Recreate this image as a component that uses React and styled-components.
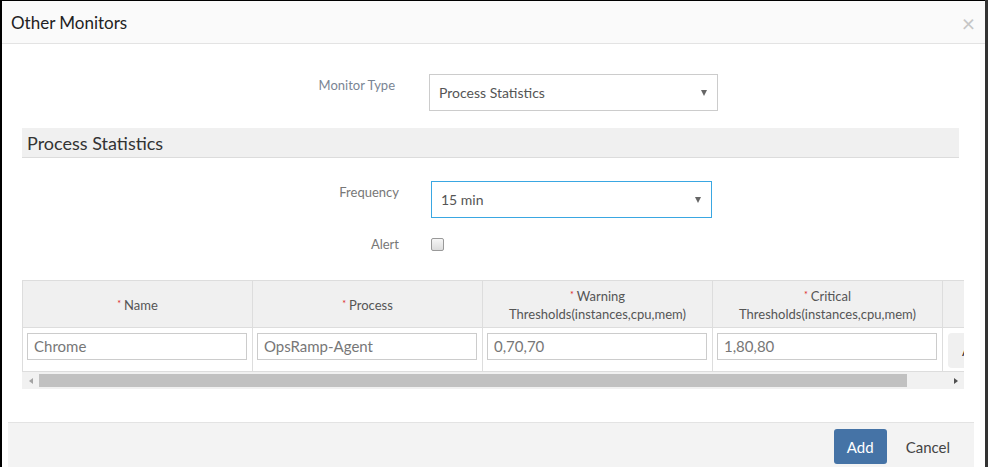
import React from 'react';
import styled, { createGlobalStyle } from 'styled-components';

const GlobalStyle = createGlobalStyle`
  html, body {
    margin: 0;
    padding: 0;
    background: #2f2f2f;
    font-family: Lato, "Open Sans", "Liberation Sans", sans-serif;
  }
`;

const Screen = styled.div`
  display: flex;
  align-items: flex-start;
  width: 988px;
  height: 467px;
  overflow: hidden;
  background: #333;
`;

const Modal = styled.div`
  width: 983px;
  flex-shrink: 0;
  background: #fff;
  border-left: 2px solid #000;
  border-top: 1px solid #000;
`;

const Header = styled.div`
  height: 42px;
  background: #fafafa;
  border-bottom: 1px solid #e3e3e3;
  display: flex;
  align-items: center;
  justify-content: space-between;
  padding: 0 10px 0 9px;
`;

const Title = styled.h4`
  margin: 0;
  font-size: 17px;
  font-weight: 400;
  color: #222;
`;

const Close = styled.span`
  font-size: 23px;
  line-height: 1;
  color: #c6c6c6;
  margin-top: 2px;
`;

const Body = styled.div`
  padding: 30px 22px 0 20px;
  display: flex;
  flex-direction: column;
`;

const FormRow = styled.div`
  display: flex;
  align-items: ${p => (p.$center ? 'center' : 'flex-start')};
  margin-bottom: ${p => p.$mb || 0}px;
`;

const Label = styled.label`
  width: ${p => p.$w}px;
  text-align: right;
  font-size: 13px;
  color: ${p => p.$color || '#777'};
  padding-top: ${p => p.$pt || 0}px;
  flex-shrink: 0;
`;

const Select = styled.div`
  margin-left: ${p => p.$ml}px;
  width: ${p => p.$w}px;
  height: 37px;
  box-sizing: border-box;
  border: 1px solid ${p => (p.$focus ? '#3aa7e2' : '#ccc')};
  display: flex;
  align-items: center;
  justify-content: space-between;
  padding: 0 10px 0 9px;
  font-size: 14px;
  color: #555;
`;

const Caret = styled.span`
  width: 0;
  height: 0;
  border-left: 3.5px solid transparent;
  border-right: 3.5px solid transparent;
  border-top: 6px solid #666;
`;

const Section = styled.div`
  height: 30px;
  width: 937px;
  background: #f0f0f0;
  border-bottom: 1px solid #dcdcdc;
  display: flex;
  align-items: center;
  padding-left: 5px;
  box-sizing: border-box;
  margin: 17px 0 23px 0;
  font-size: 18px;
  color: #333;
`;

const Checkbox = styled.span`
  margin-left: ${p => p.$ml}px;
  width: 11px;
  height: 11px;
  border: 1px solid #999;
  border-radius: 2px;
  background: linear-gradient(#f6f6f6, #dcdcdc);
`;

const TableWrap = styled.div`
  width: 942px;
  margin-top: 28px;
  overflow: hidden;
`;

const Table = styled.div`
  display: grid;
  grid-template-columns: 230px 230px 230px 230px 80px;
  width: 1000px;
  border-top: 1px solid #ddd;
  border-left: 1px solid #ddd;
`;

const Th = styled.div`
  height: 46px;
  background: #f0f0f0;
  border-right: 1px solid #ddd;
  border-bottom: 1px solid #ddd;
  display: flex;
  flex-direction: column;
  align-items: center;
  justify-content: center;
  font-size: 13px;
  line-height: 18px;
  color: #555;
  text-align: center;
`;

const Req = styled.span`
  color: #d22;
  font-size: 9px;
  vertical-align: 3px;
  margin-right: 3px;
`;

const Td = styled.div`
  height: 44px;
  border-right: 1px solid #ddd;
  border-bottom: 1px solid #ddd;
  padding: 5px 5px 0 4px;
  box-sizing: border-box;
  overflow: hidden;
`;

const Input = styled.div`
  height: 27px;
  box-sizing: border-box;
  border: 1px solid #ccc;
  padding: 0 6px;
  font-size: 15px;
  line-height: 25px;
  color: #777;
`;

const RowButton = styled.div`
  width: 60px;
  height: 35px;
  margin-left: 1px;
  background: #f0f0f0;
  border-radius: 4px;
  font-size: 14px;
  color: #333;
  display: flex;
  align-items: center;
  padding-left: 14px;
  box-sizing: border-box;
`;

const Scrollbar = styled.div`
  width: 942px;
  height: 17px;
  background: #f1f1f1;
  display: flex;
  align-items: center;
`;

const Arrow = styled.span`
  width: 17px;
  display: flex;
  justify-content: center;
  margin-left: ${p => (p.$right ? 'auto' : '0')};
  &::before {
    content: '';
    border-top: 3.5px solid transparent;
    border-bottom: 3.5px solid transparent;
    ${p => (p.$right ? 'border-left: 4px solid #505050;' : 'border-right: 4px solid #a3a3a3;')}
  }
`;

const Thumb = styled.div`
  height: 13px;
  background: #c1c1c1;
  width: ${p => p.$w}px;
`;

const Footer = styled.div`
  margin: 33px 11px 0 6px;
  border-top: 1px solid #e3e3e3;
  background: #f3f3f3;
  height: 60px;
  display: flex;
  justify-content: flex-end;
  align-items: flex-start;
  padding: 6px 24px 0 0;
  gap: 19px;
`;

const Button = styled.button`
  font-family: inherit;
  font-size: 15px;
  border: none;
  border-radius: 3px;
  height: 35px;
  padding: 0 ${p => (p.$primary ? 13 : 0)}px;
  background: ${p => (p.$primary ? '#4573a6' : 'transparent')};
  color: ${p => (p.$primary ? '#fff' : '#444')};
`;

const columns = [
  { title: 'Name', value: 'Chrome' },
  { title: 'Process', value: 'OpsRamp-Agent' },
  { title: 'Warning', sub: 'Thresholds(instances,cpu,mem)', value: '0,70,70' },
  { title: 'Critical', sub: 'Thresholds(instances,cpu,mem)', value: '1,80,80' },
];

export default function App() {
  return (
    <>
      <GlobalStyle />
      <Screen>
        <Modal>
          <Header>
            <Title>Other Monitors</Title>
            <Close>×</Close>
          </Header>
          <Body>
            <FormRow>
              <Label $w={373} $color="#7a8594" $pt={3}>Monitor Type</Label>
              <Select $ml={34} $w={289}>
                Process Statistics
                <Caret />
              </Select>
            </FormRow>
            <Section>Process Statistics</Section>
            <FormRow $mb={18}>
              <Label $w={377} $pt={3}>Frequency</Label>
              <Select $ml={32} $w={281} $focus>
                15 min
                <Caret />
              </Select>
            </FormRow>
            <FormRow $center>
              <Label $w={377}>Alert</Label>
              <Checkbox $ml={32} />
            </FormRow>
            <TableWrap>
              <Table>
                {columns.map(c => (
                  <Th key={c.title}>
                    <span><Req>*</Req>{c.title}</span>
                    {c.sub && <span>{c.sub}</span>}
                  </Th>
                ))}
                <Th />
                {columns.map(c => (
                  <Td key={c.title}>
                    <Input>{c.value}</Input>
                  </Td>
                ))}
                <Td>
                  <RowButton>Add</RowButton>
                </Td>
              </Table>
              <Scrollbar>
                <Arrow />
                <Thumb $w={868} />
                <Arrow $right />
              </Scrollbar>
            </TableWrap>
          </Body>
          <Footer>
            <Button $primary>Add</Button>
            <Button>Cancel</Button>
          </Footer>
        </Modal>
      </Screen>
    </>
  );
}
